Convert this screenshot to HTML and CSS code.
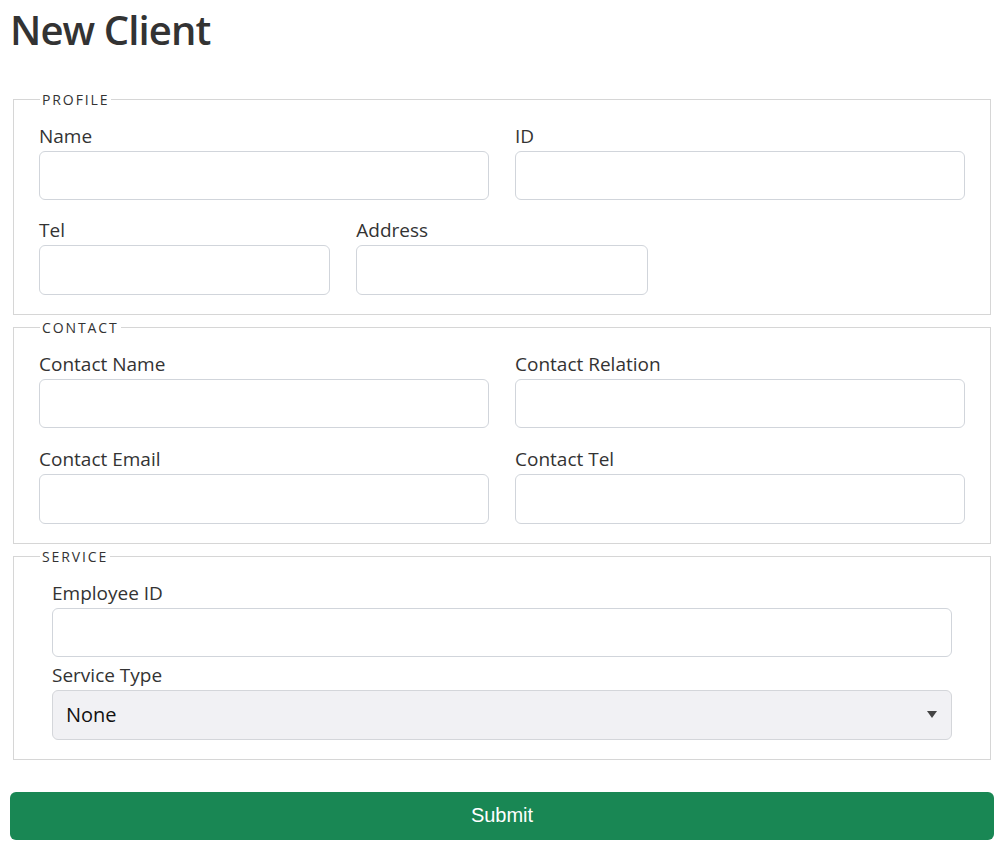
FILE: index.html
```html
<!DOCTYPE html>
<html lang="en">
<head>
<meta charset="utf-8">
<title>New Client</title>
<link rel="stylesheet" href="styles.css">
</head>
<body>
<div class="page">
  <h1 class="title">New Client</h1>
  <form class="form">
    <fieldset class="group">
      <legend class="group-legend">Profile</legend>
      <div class="row cols-2">
        <div class="field"><label class="label">Name</label><input class="input" type="text"></div>
        <div class="field"><label class="label">ID</label><input class="input" type="text"></div>
      </div>
      <div class="row cols-3">
        <div class="field"><label class="label">Tel</label><input class="input" type="text"></div>
        <div class="field"><label class="label">Address</label><input class="input" type="text"></div>
      </div>
    </fieldset>
    <fieldset class="group">
      <legend class="group-legend">Contact</legend>
      <div class="row cols-2">
        <div class="field"><label class="label">Contact Name</label><input class="input" type="text"></div>
        <div class="field"><label class="label">Contact Relation</label><input class="input" type="text"></div>
      </div>
      <div class="row cols-2 row-loose">
        <div class="field"><label class="label">Contact Email</label><input class="input" type="text"></div>
        <div class="field"><label class="label">Contact Tel</label><input class="input" type="text"></div>
      </div>
    </fieldset>
    <fieldset class="group group-service">
      <legend class="group-legend">Service</legend>
      <div class="field"><label class="label">Employee ID</label><input class="input" type="text"></div>
      <div class="field field-tight"><label class="label">Service Type</label>
        <div class="select">
          <span class="select-value">None</span>
          <svg class="select-arrow" width="10" height="8" viewBox="0 0 10 8"><path d="M0 0 L10 0 L5 7 Z" fill="#444"/></svg>
        </div>
      </div>
    </fieldset>
    <button class="submit" type="button">Submit</button>
  </form>
</div>
</body>
</html>
```
FILE: styles.css
```css
* { box-sizing: border-box; }
html, body { margin: 0; padding: 0; background: #fff; }
body {
  font-family: "Open Sans", "Noto Sans", sans-serif;
  color: #333;
}
.page { padding: 6px 14px 0 10px; }
.title {
  margin: 0 0 35px 0;
  font-size: 40px;
  line-height: 48px;
  font-weight: 600;
  letter-spacing: -0.9px;
  color: #333;
}
.form { display: flex; flex-direction: column; }
.group {
  margin: 0 3px 2px 3px;
  border: 1px solid #d6d6d6;
  padding: 11px 25px 19px 25px;
  min-width: 0;
}
.group-legend {
  padding: 0 2px;
  margin-left: 1px;
  font-size: 14px;
  line-height: 21px;
  letter-spacing: 1.9px;
  text-transform: uppercase;
  color: #333;
}
.row { display: grid; column-gap: 26px; }
.row + .row { margin-top: 15px; }
.row + .row-loose { margin-top: 16px; }
.cols-2 { grid-template-columns: 1fr 1fr; }
.cols-3 { grid-template-columns: repeat(3, calc((100% + 26px) / 3 - 26px)); }
.field { display: flex; flex-direction: column; }
.label {
  font-size: 19px;
  line-height: 30px;
  color: #333;
}
.input {
  height: 49.4px;
  border: 1px solid #d1d5db;
  border-radius: 6px;
  font-size: 20px;
  padding: 0 14px;
  background: #fff;
}
.group-service { padding-left: 38px; padding-right: 38px; }
.group-service .group-legend { margin-left: -12px; }
.field-tight { margin-top: 3px; }
.select {
  height: 50px;
  border: 1px solid #d4d6da;
  border-radius: 6px;
  background: #f1f1f4;
  display: flex;
  align-items: center;
  justify-content: space-between;
  padding: 0 14px 0 13px;
}
.select-value {
  font-size: 20px;
  color: #111;
}
.submit {
  margin-top: 30px;
  height: 48px;
  border: none;
  border-radius: 6px;
  background: #198754;
  color: #fff;
  font-family: "Liberation Sans", Arial, sans-serif;
  font-size: 20px;
}
```
